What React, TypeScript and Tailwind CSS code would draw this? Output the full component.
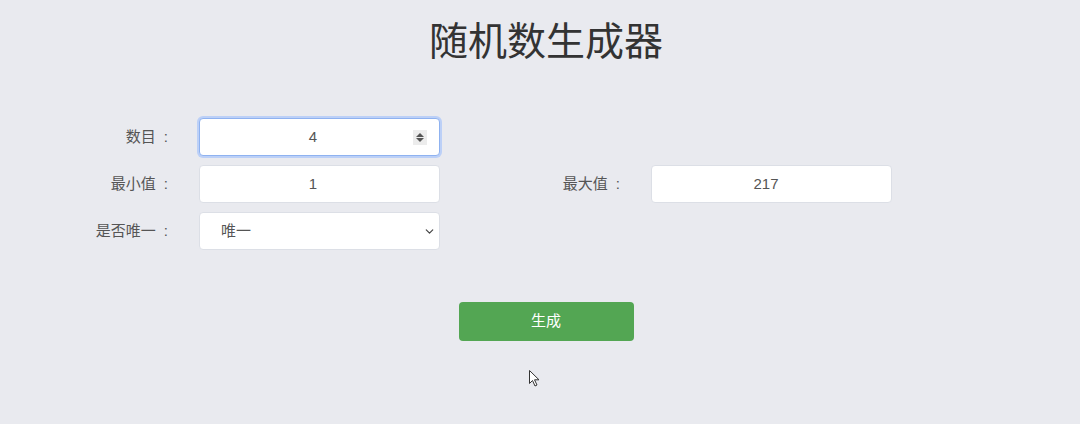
import { ChevronDown } from 'lucide-react';

const font = { fontFamily: '"Liberation Sans", "Noto Sans CJK SC", sans-serif' };

function Label({ text, width }: { text: string; width: string }) {
  return (
    <label className={`${width} shrink-0 text-right text-[15px] text-[#555] leading-[38px] pr-[27px]`}>
      {text}
      <span className="ml-[8px] mr-[4px]">:</span>
    </label>
  );
}

export default function App() {
  return (
    <div className="relative min-h-screen w-full bg-[#e9eaef] text-[#333]" style={font}>
      <div className="flex justify-center pl-[12px] pt-[17px]">
        <h1 className="text-[39px] leading-[50px] font-normal text-[#333]">随机数生成器</h1>
      </div>

      <div className="mt-[51px] flex flex-col gap-[9px]">
        <div className="flex">
          <Label text="数目" width="w-[199px]" />
          <div className="relative w-[241px] h-[38px] rounded-[4px] bg-white border border-[#8fb2f0] ring-[2px] ring-[#bcd0f7] flex items-center justify-center pr-[13px] text-[15px] text-[#555]">
            4
            <span className="absolute right-[12px] top-[11px] w-[14px] h-[15px] bg-[#ececec] flex flex-col items-center justify-center gap-[1px]">
              <svg width="8" height="4" viewBox="0 0 8 4"><path d="M0 4 L4 0 L8 4 Z" fill="#555" /></svg>
              <svg width="8" height="4" viewBox="0 0 8 4"><path d="M0 0 L4 4 L8 0 Z" fill="#555" /></svg>
            </span>
          </div>
        </div>

        <div className="flex">
          <Label text="最小值" width="w-[199px]" />
          <div className="w-[241px] h-[38px] rounded-[4px] bg-white border border-[#dcdfe6] flex items-center justify-center pr-[13px] text-[15px] text-[#555]">
            1
          </div>
          <Label text="最大值" width="w-[211px]" />
          <div className="w-[241px] h-[38px] rounded-[4px] bg-white border border-[#dcdfe6] flex items-center justify-center pr-[11px] text-[15px] text-[#555]">
            217
          </div>
        </div>

        <div className="flex">
          <Label text="是否唯一" width="w-[199px]" />
          <div className="w-[241px] h-[38px] rounded-[4px] bg-white border border-[#dcdfe6] flex items-center justify-between pl-[21px] pr-[3px] text-[15px] text-[#555]">
            <span>唯一</span>
            <ChevronDown size={13} strokeWidth={2.2} className="text-[#444]" />
          </div>
        </div>
      </div>

      <div className="flex justify-center pl-[12px] mt-[52px]">
        <button className="w-[175px] h-[39px] rounded-[4px] bg-[#53a653] text-white text-[15px]">生成</button>
      </div>

      <svg className="absolute left-[529px] top-[370px]" width="11" height="17" viewBox="0 0 11 17">
        <path d="M0.5 0.5 L0.5 13.5 L3.5 10.5 L6 16 L8 15 L5.5 9.8 L10 9.8 Z" fill="#fff" stroke="#333" strokeWidth="1" strokeLinejoin="round" />
      </svg>
    </div>
  );
}
